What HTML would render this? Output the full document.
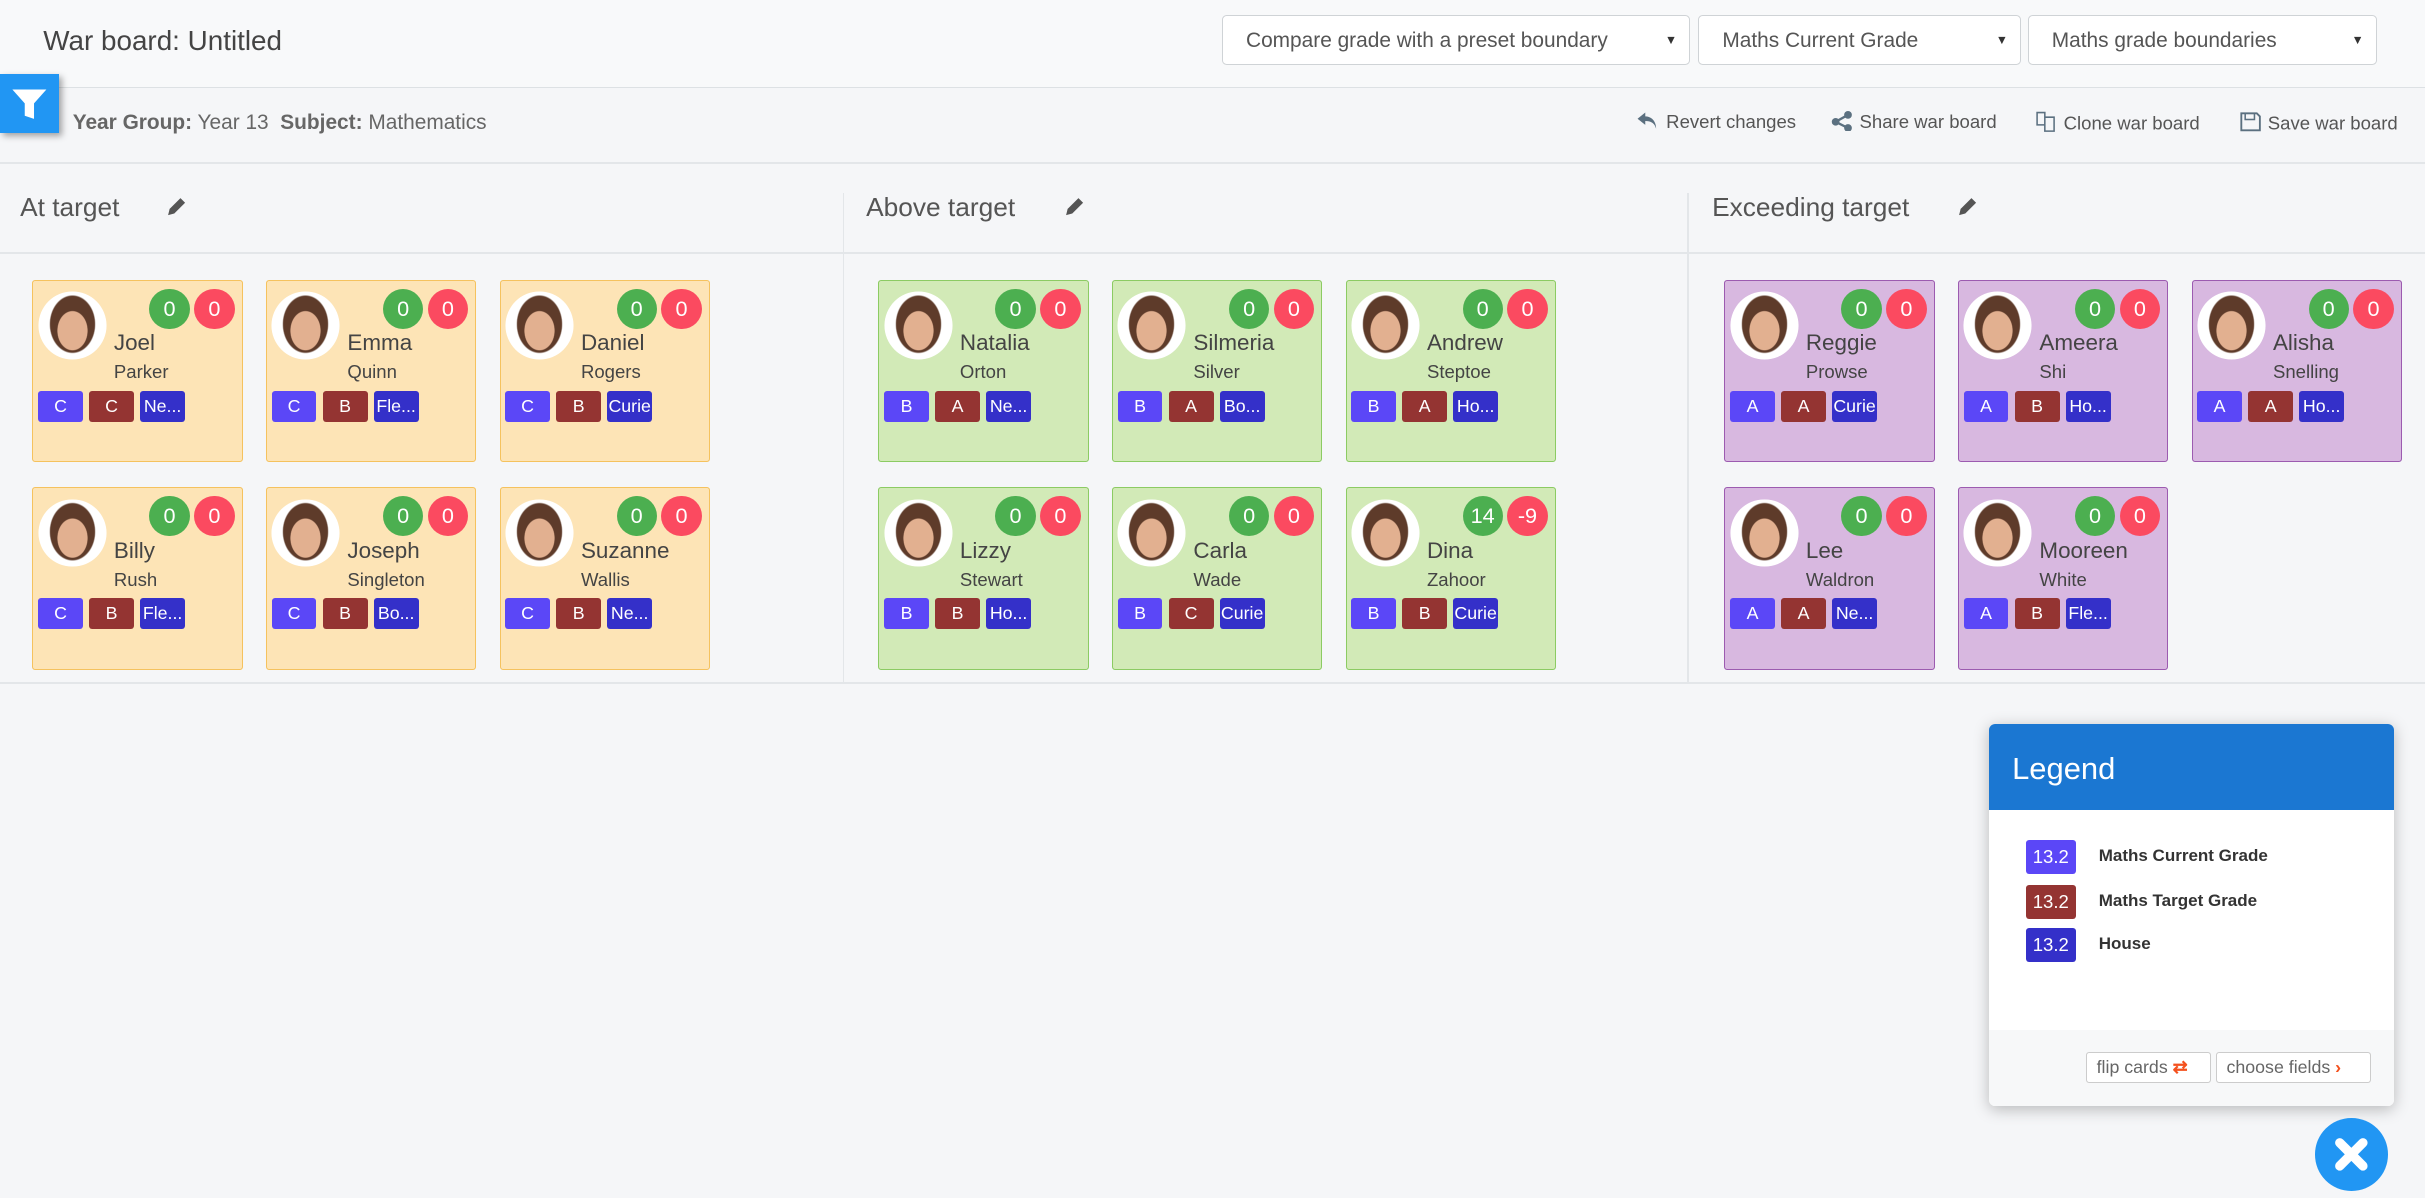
<!DOCTYPE html>
<html><head><meta charset="utf-8">
<style>
html{zoom:1.5466}
body{margin:0;width:1568px;height:773px;background:#f5f6f8;font-family:"Liberation Sans",Arial,sans-serif;position:relative;overflow:hidden;color:#555}
.hdr{position:absolute;left:0;top:0;width:1568px;height:56px;background:#f8f9fa;border-bottom:1px solid #dde1e4}
.title{position:absolute;left:28px;top:16px;font-size:18px;color:#444}
.sel{position:absolute;top:10px;height:32px;background:#fff;border:1px solid #cfd3d6;border-radius:3px;font-size:13.5px;color:#555;line-height:32px;padding-left:15px;box-sizing:border-box}
.sel:after{content:"▼";position:absolute;right:8px;top:0;font-size:8px;color:#333}
.filter{position:absolute;left:0;top:48px;width:38px;height:38px;background:#2196f3;box-shadow:2px 2px 4px rgba(0,0,0,.35)}
.sub{position:absolute;left:47px;top:72px;font-size:13.5px;color:#666}
.sub b{color:#666}
.act{position:absolute;top:72px;font-size:12px;color:#555}
.ln{position:absolute;left:0;width:1568px;height:1px;background:#e3e6e9}
.vl{position:absolute;top:125px;width:1px;height:316px;background:#e3e6e9}
.ch{position:absolute;top:124px;font-size:17px;color:#555}
.pen{position:absolute;top:126px}
.card{position:absolute;width:136px;height:118px;box-sizing:border-box;border:1px solid;border-radius:2px}
.o{background:#fde4b6;border-color:#f5c25e}
.g{background:#d2eab7;border-color:#8ccb63}
.p{background:#d8b8e0;border-color:#9c5bb0}
.av{position:absolute;left:4px;top:8px;width:42px;height:42px;border-radius:50%;background:radial-gradient(ellipse 10px 13px at 50% 58%,#e2b090 0 95%,transparent 100%),radial-gradient(ellipse 15px 19px at 50% 48%,#5e3b2a 0 95%,transparent 100%),#fff;box-shadow:0 0 0 1px #fff}
.b1,.b2{position:absolute;top:5px;width:26px;height:26px;border-radius:50%;color:#fff;font-size:14px;line-height:26px;text-align:center}
.b1{left:75px;background:#4caf50}.b2{left:104px;background:#fb4a60}
.fn{position:absolute;left:52px;top:32px;font-size:14.5px;color:#444}
.ln2{position:absolute;left:52px;top:52px;font-size:12px;color:#444}
.t{position:absolute;top:71px;width:29px;height:20px;border-radius:2px;color:#fff;font-size:11.5px;line-height:20px;text-align:center;overflow:hidden;white-space:nowrap}
.t1{left:3px;background:#5b47f7}.t2{left:36px;background:#943432}.t3{left:69px;background:#3430c9}
.leg{position:absolute;left:1286px;top:468px;width:262px;height:247px;background:#fff;border-radius:4px;box-shadow:0 2px 10px rgba(0,0,0,.25);overflow:hidden}
.lh{height:56px;background:#1b77d2;color:#fff;font-size:20px;line-height:58px;padding-left:15px}
.li{position:absolute;left:24px;width:32px;height:22px;border-radius:2px;color:#fff;font-size:12px;line-height:22px;text-align:center}
.lt{position:absolute;left:71px;font-size:11px;font-weight:bold;color:#333}
.lf{position:absolute;left:0;top:198px;width:262px;height:49px;background:#f7f8f9}
.btn{position:absolute;top:14px;height:19px;border:1px solid #ccc;border-radius:2px;background:#fff;font-size:11.5px;color:#666;line-height:19px;box-sizing:content-box;padding-left:6px}
.close{position:absolute;left:1497px;top:723px;width:47px;height:47px;border-radius:50%;background:#2196f3}
</style></head><body>
<div class="hdr">
<div class="title">War board: Untitled</div>
<div class="sel" style="left:790px;width:303px">Compare grade with a preset boundary</div>
<div class="sel" style="left:1098px;width:209px">Maths Current Grade</div>
<div class="sel" style="left:1311px;width:226px">Maths grade boundaries</div>
</div>
<div class="filter"><svg width="38" height="38" viewBox="0 0 38 38"><path d="M8 10h22l-8 9v10l-6-2v-8z" fill="#fff"/></svg></div>
<div class="sub"><b>Year Group:</b> Year 13&nbsp;&nbsp;<b>Subject:</b> Mathematics</div>
<div class="act" style="left:1058px"><svg width="16" height="13" viewBox="0 0 16 13" style="vertical-align:-2px"><path d="M6 1L1 5l5 4V6.5c4 0 6 1.5 7 5 0-5-3-8-7-8z" fill="#5b7080"/></svg> Revert changes</div>
<div class="act" style="left:1184px"><svg width="15" height="13" viewBox="0 0 15 13" style="vertical-align:-2px"><circle cx="3" cy="7" r="2.5" fill="#5b7080"/><circle cx="11" cy="2.5" r="2.5" fill="#5b7080"/><circle cx="11" cy="11" r="2.5" fill="#5b7080"/><path d="M3 7L11 2.5M3 7l8 4" stroke="#5b7080" stroke-width="1.5"/></svg> Share war board</div>
<div class="act" style="left:1315px"><svg width="16" height="14" viewBox="0 0 16 14" style="vertical-align:-2px"><path d="M2 1h5v8H2zM7 4h6v9H7z" fill="none" stroke="#5b7080"/></svg> Clone war board</div>
<div class="act" style="left:1448px"><svg width="15" height="14" viewBox="0 0 15 14" style="vertical-align:-2px"><path d="M1.5 1.5h10l2 2v9h-12z" fill="none" stroke="#5b7080" stroke-width="1.2"/><rect x="4" y="1.5" width="6" height="4" fill="none" stroke="#5b7080"/></svg> Save war board</div>
<div class="ln" style="top:105px"></div>
<div class="ln" style="top:163px"></div>
<div class="ln" style="top:441px"></div>
<div class="vl" style="left:545px"></div>
<div class="vl" style="left:1091px"></div>
<div class="ch" style="left:13px">At target</div>
<div class="ch" style="left:560px">Above target</div>
<div class="ch" style="left:1107px">Exceeding target</div>
<svg class="pen" style="left:107px" width="15" height="15" viewBox="0 0 15 15"><path d="M2 13l1-4 7-7 3 3-7 7z" fill="#555"/></svg>
<svg class="pen" style="left:687px" width="15" height="15" viewBox="0 0 15 15"><path d="M2 13l1-4 7-7 3 3-7 7z" fill="#555"/></svg>
<svg class="pen" style="left:1265px" width="15" height="15" viewBox="0 0 15 15"><path d="M2 13l1-4 7-7 3 3-7 7z" fill="#555"/></svg>

<div class="card o" style="left:21px;top:181px"><div class="av"></div><div class="b1">0</div><div class="b2">0</div><div class="fn">Joel</div><div class="ln2">Parker</div><div class="t t1">C</div><div class="t t2">C</div><div class="t t3">Ne...</div></div>
<div class="card o" style="left:172px;top:181px"><div class="av"></div><div class="b1">0</div><div class="b2">0</div><div class="fn">Emma</div><div class="ln2">Quinn</div><div class="t t1">C</div><div class="t t2">B</div><div class="t t3">Fle...</div></div>
<div class="card o" style="left:323px;top:181px"><div class="av"></div><div class="b1">0</div><div class="b2">0</div><div class="fn">Daniel</div><div class="ln2">Rogers</div><div class="t t1">C</div><div class="t t2">B</div><div class="t t3">Curie</div></div>
<div class="card o" style="left:21px;top:315px"><div class="av"></div><div class="b1">0</div><div class="b2">0</div><div class="fn">Billy</div><div class="ln2">Rush</div><div class="t t1">C</div><div class="t t2">B</div><div class="t t3">Fle...</div></div>
<div class="card o" style="left:172px;top:315px"><div class="av"></div><div class="b1">0</div><div class="b2">0</div><div class="fn">Joseph</div><div class="ln2">Singleton</div><div class="t t1">C</div><div class="t t2">B</div><div class="t t3">Bo...</div></div>
<div class="card o" style="left:323px;top:315px"><div class="av"></div><div class="b1">0</div><div class="b2">0</div><div class="fn">Suzanne</div><div class="ln2">Wallis</div><div class="t t1">C</div><div class="t t2">B</div><div class="t t3">Ne...</div></div>

<div class="card g" style="left:568px;top:181px"><div class="av"></div><div class="b1">0</div><div class="b2">0</div><div class="fn">Natalia</div><div class="ln2">Orton</div><div class="t t1">B</div><div class="t t2">A</div><div class="t t3">Ne...</div></div>
<div class="card g" style="left:719px;top:181px"><div class="av"></div><div class="b1">0</div><div class="b2">0</div><div class="fn">Silmeria</div><div class="ln2">Silver</div><div class="t t1">B</div><div class="t t2">A</div><div class="t t3">Bo...</div></div>
<div class="card g" style="left:870px;top:181px"><div class="av"></div><div class="b1">0</div><div class="b2">0</div><div class="fn">Andrew</div><div class="ln2">Steptoe</div><div class="t t1">B</div><div class="t t2">A</div><div class="t t3">Ho...</div></div>
<div class="card g" style="left:568px;top:315px"><div class="av"></div><div class="b1">0</div><div class="b2">0</div><div class="fn">Lizzy</div><div class="ln2">Stewart</div><div class="t t1">B</div><div class="t t2">B</div><div class="t t3">Ho...</div></div>
<div class="card g" style="left:719px;top:315px"><div class="av"></div><div class="b1">0</div><div class="b2">0</div><div class="fn">Carla</div><div class="ln2">Wade</div><div class="t t1">B</div><div class="t t2">C</div><div class="t t3">Curie</div></div>
<div class="card g" style="left:870px;top:315px"><div class="av"></div><div class="b1">14</div><div class="b2">-9</div><div class="fn">Dina</div><div class="ln2">Zahoor</div><div class="t t1">B</div><div class="t t2">B</div><div class="t t3">Curie</div></div>

<div class="card p" style="left:1115px;top:181px"><div class="av"></div><div class="b1">0</div><div class="b2">0</div><div class="fn">Reggie</div><div class="ln2">Prowse</div><div class="t t1">A</div><div class="t t2">A</div><div class="t t3">Curie</div></div>
<div class="card p" style="left:1266px;top:181px"><div class="av"></div><div class="b1">0</div><div class="b2">0</div><div class="fn">Ameera</div><div class="ln2">Shi</div><div class="t t1">A</div><div class="t t2">B</div><div class="t t3">Ho...</div></div>
<div class="card p" style="left:1417px;top:181px"><div class="av"></div><div class="b1">0</div><div class="b2">0</div><div class="fn">Alisha</div><div class="ln2">Snelling</div><div class="t t1">A</div><div class="t t2">A</div><div class="t t3">Ho...</div></div>
<div class="card p" style="left:1115px;top:315px"><div class="av"></div><div class="b1">0</div><div class="b2">0</div><div class="fn">Lee</div><div class="ln2">Waldron</div><div class="t t1">A</div><div class="t t2">A</div><div class="t t3">Ne...</div></div>
<div class="card p" style="left:1266px;top:315px"><div class="av"></div><div class="b1">0</div><div class="b2">0</div><div class="fn">Mooreen</div><div class="ln2">White</div><div class="t t1">A</div><div class="t t2">B</div><div class="t t3">Fle...</div></div>

<div class="leg">
<div class="lh">Legend</div>
<div class="li" style="top:75px;background:#5b47f7">13.2</div><div class="lt" style="top:79px">Maths Current Grade</div>
<div class="li" style="top:104px;background:#943432">13.2</div><div class="lt" style="top:108px">Maths Target Grade</div>
<div class="li" style="top:132px;background:#3430c9">13.2</div><div class="lt" style="top:136px">House</div>
<div class="lf">
<div class="btn" style="left:63px;width:73px">flip cards <span style="color:#f4511e;font-weight:bold">⇄</span></div>
<div class="btn" style="left:147px;width:93px">choose fields <span style="color:#f4511e;font-weight:bold">›</span></div>
</div>
</div>
<div class="close"><svg width="47" height="47" viewBox="0 0 47 47"><path d="M16 16L31 31M31 16L16 31" stroke="#fff" stroke-width="6" stroke-linecap="round"/></svg></div>
</body></html>
